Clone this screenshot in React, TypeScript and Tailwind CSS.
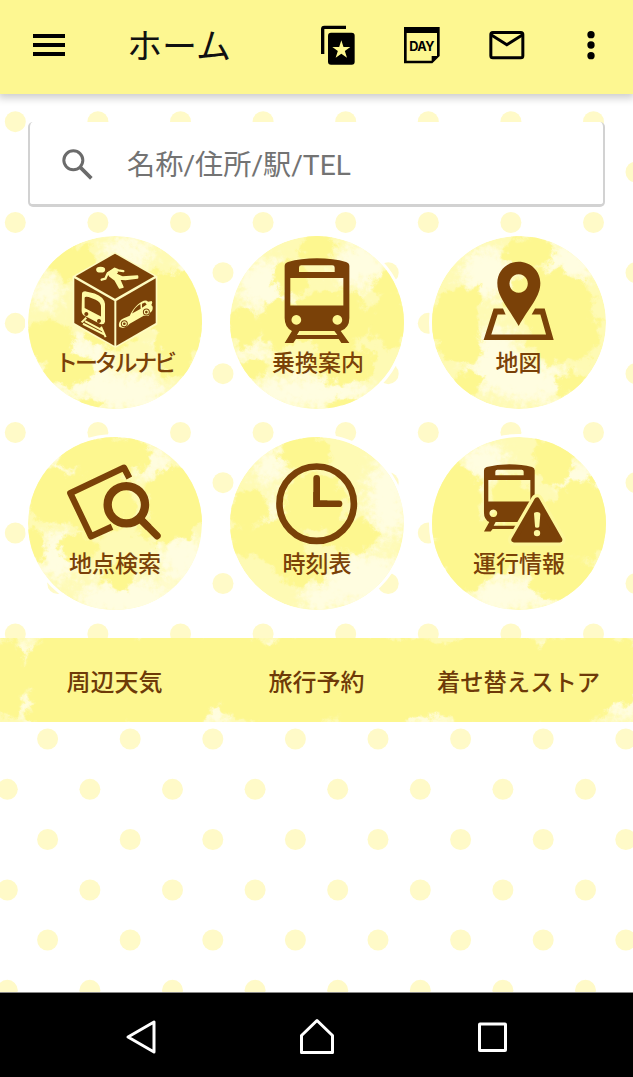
import React from 'react';

type Blob = [cx: number, cy: number, rx: number, ry: number];

interface Tile {
  label: string;
  labelClass: string;
  viewBox: string;
  deep: Blob[];
  pale: Blob[];
  icon: React.ReactNode;
}

const BROWN = '#7a4108';
const YELLOW = '#fdf78f';

// first dot x, row y
const dotRows: [number, number][] = [
  [15.3, 121.7], [-24.8, 172], [15.3, 222.5], [-24.8, 272.7], [15.3, 323.3], [-24.8, 373.7],
  [15.3, 432.5], [-24.8, 482.7], [15.3, 533], [-24.8, 583.5], [15.3, 634],
  [47.6, 739], [7.3, 789.3], [47.6, 839.5], [7.3, 890], [47.6, 940], [7.3, 990.3],
];

const DotBackground: React.FC = () => (
  <svg className="absolute inset-0 h-full w-full" viewBox="0 0 633 1077" fill="#fffac8">
    {dotRows.map(([x, y]) =>
      Array.from({ length: 9 }, (_, i) => <circle key={`${y}-${i}`} cx={x + i * 82.6} cy={y} r={10.5} />)
    )}
  </svg>
);

const Filters: React.FC = () => (
  <svg className="absolute h-0 w-0">
    <defs>
      <filter id="paint" x="-30%" y="-30%" width="160%" height="160%">
        <feGaussianBlur stdDeviation={4} result="b" />
        <feTurbulence type="fractalNoise" baseFrequency="0.03" numOctaves={5} seed={7} result="n" />
        <feDisplacementMap in="b" in2="n" scale={60} xChannelSelector="R" yChannelSelector="G" />
        <feGaussianBlur stdDeviation={2} />
      </filter>
      <filter id="mist" x="-40%" y="-40%" width="180%" height="180%">
        <feGaussianBlur stdDeviation={18} result="b" />
        <feTurbulence type="fractalNoise" baseFrequency="0.05" numOctaves={5} seed={3} result="n" />
        <feDisplacementMap in="b" in2="n" scale={80} xChannelSelector="G" yChannelSelector="R" />
      </filter>
    </defs>
  </svg>
);

const Wash: React.FC<{ deep: Blob[]; pale: Blob[] }> = ({ deep, pale }) => (
  <>
    <g fill="#fffde0" filter="url(#mist)">
      {pale.map(([cx, cy, rx, ry], i) => <ellipse key={i} cx={cx} cy={cy} rx={rx} ry={ry} />)}
    </g>
    <g fill={YELLOW} filter="url(#paint)">
      {deep.map(([cx, cy, rx, ry], i) => <ellipse key={i} cx={cx} cy={cy} rx={rx} ry={ry} />)}
    </g>
  </>
);

const CubeIcon = (
  <g>
    <path fill="#fefbc0" d="M299 80 426 153V297L300 368 172 297V153Z" />
    <g fill={BROWN}>
      <path d="M299 85 417 153 299 220 181 153Z" />
      <path d="M177 159 297 227V361L177 293Z" />
      <path d="M303 227 421 159V293L303 361Z" />
    </g>
    {/* walker */}
    <g fill="#fefba6" stroke="#fefba6" strokeLinecap="round" strokeLinejoin="round">
      <ellipse cx="256" cy="133" rx="13.500" ry="8.500" stroke="none" />
      <path fill="none" strokeWidth="7" d="M259 163 270 160 277 144 298 130 309 135 324 137" />
      <path strokeWidth="6" d="M278 143 299 132 305 140 300 146 322 156 366 153 366 157 330 162 311 160 322 185 313 187 300 164 284 152Z" />
    </g>
    {/* train */}
    <path
      fill="#fefba6"
      fillRule="evenodd"
      d="M200 206Q200 197 212 198L238 204Q266 214 269 235V289Q267 299 255 296L209 272Q199 267 199 256ZM208 217V248L257 273V241Q255 229 241 223L220 215Q209 212 208 217ZM213 260a6 6 0 1 0 .1 0ZM251 281a6 6 0 1 0 .1 0Z"
    />
    <path fill="none" stroke="#fefba6" strokeWidth="6" d="M213 277 199 291M257 304 271 335M209 287 261 315M203 295 266 327" />
    {/* car */}
    <path
      fill="#fefba6"
      d="M312 305C308 294 314 283 327 278L343 271C354 249 369 232 385 226Q394 223 398 229L409 227Q413 232 408 239L412 244Q413 257 404 262L400 271 385 271 343 295 334 304 323 308Z"
    />
    <path fill={BROWN} d="M350 264Q361 243 375 236L376 250ZM380 235 389 231 394 237 380 247Z" />
    <g fill="none" stroke={BROWN} strokeWidth="3">
      <circle cx="327" cy="295" r="9" />
      <circle cx="393" cy="260" r="9" />
    </g>
    <g fill={BROWN}>
      <circle cx="327" cy="295" r="4" />
      <circle cx="393" cy="260" r="4" />
    </g>
  </g>
);

const TrainIcon = (
  <path
    fill={BROWN}
    fillRule="evenodd"
    d="M202 122Q202 113 212 110Q250 99 299 99Q348 99 386 110Q396 113 396 122V278Q396 308 370 317L396 353H372L364 341H236L228 353H202L224 317Q202 306 202 278ZM252 120Q245 120 245 127V140H352V127Q352 120 345 120ZM219 158V240H378V158ZM237 269a14.500 14.500 0 1 0 .1 0ZM360 269a14.500 14.500 0 1 0 .1 0ZM246 317 239 329H360L351 317Z"
  />
);

const MapIcon = (
  <g fill={BROWN}>
    <path d="M220 247H248L256 265H232L213 325H377L360 265H334L344 247H373L400 342H190Z" />
    <path
      fillRule="evenodd"
      d="M295 107C259 107 231 135 231 171C231 212 262 242 295 300C328 242 360 212 360 171C360 135 331 107 295 107ZM295 145a27.500 27.500 0 1 1-.1 0Z"
    />
  </g>
);

const SpotSearchIcon = (
  <g fill="none" stroke={BROWN}>
    <path strokeWidth="19" strokeLinejoin="round" d="M342 158 326 127 165 203 227 333 290 304" />
    <circle cx="333" cy="238" r="56" strokeWidth="25" />
    <path strokeWidth="22" d="M370 276 400 306" />
    <path strokeWidth="22" strokeLinecap="round" d="M380 286 425 331" />
  </g>
);

const ClockIcon = (
  <g fill="none" stroke={BROWN}>
    <circle cx="298" cy="235" r="111.500" strokeWidth="20" />
    <path strokeWidth="20" strokeLinecap="round" d="M298 159V235H365" />
    <path strokeWidth="20" d="M298 200V235H330" />
  </g>
);

const TrainAlertIcon = (
  <g>
    <path
      fill={BROWN}
      fillRule="evenodd"
      d="M191 135Q191 127 199 125Q230 117 267 117Q305 117 335 125Q343 127 343 135V260L300 311H217L211 318H191L207 290Q191 282 191 262ZM231 133Q225 133 225 139V150H310V139Q310 133 304 133ZM204 164V228H330V164ZM219 252a11.500 11.500 0 1 0 .1 0ZM226 290 220 301H300V290Z"
    />
    <path
      d="M350 224 281 343H418Z"
      fill="#fdf79a"
      stroke="#fdf79a"
      strokeWidth="36"
      strokeLinejoin="round"
    />
    <path d="M350 224 281 343H418Z" fill={BROWN} stroke={BROWN} strokeWidth="16" strokeLinejoin="round" />
    <path fill="#fdf9a0" d="M341 265Q341 260 350 260T360 265L357 303Q356 307 350 307T344 303Z" />
    <circle cx="350" cy="323" r="9.500" fill="#fdf9a0" />
  </g>
);

const tiles: Tile[] = [
  {
    label: 'トータルナビ',
    labelClass: 'tracking-[-3.2px]',
    viewBox: '39 32 520 520',
    deep: [[175, 110, 75, 55], [450, 230, 140, 95], [100, 345, 75, 65], [490, 300, 80, 110], [290, 280, 90, 90], [490, 430, 50, 30], [225, 535, 40, 20], [160, 430, 80, 50]],
    pale: [[340, 80, 80, 45], [90, 200, 50, 50], [190, 420, 100, 90], [330, 500, 130, 60], [470, 350, 50, 35], [520, 150, 40, 40]],
    icon: CubeIcon,
  },
  {
    label: '乗換案内',
    labelClass: 'ml-[3px]',
    viewBox: '39 32 520 520',
    deep: [[305, 65, 55, 45], [80, 310, 50, 60], [185, 295, 60, 75], [340, 280, 120, 90], [515, 290, 60, 80], [380, 415, 100, 60], [510, 180, 45, 40], [380, 535, 45, 25], [220, 160, 55, 50], [100, 430, 55, 25]],
    pale: [[150, 180, 90, 80], [430, 120, 80, 70], [110, 380, 60, 30], [280, 500, 190, 50]],
    icon: TrainIcon,
  },
  {
    label: '地図',
    labelClass: '',
    viewBox: '36 30 520 520',
    deep: [[325, 80, 75, 50], [100, 290, 80, 100], [145, 225, 45, 45], [390, 220, 130, 90], [430, 320, 110, 90], [145, 475, 40, 40], [450, 475, 48, 35], [130, 375, 60, 45]],
    pale: [[200, 140, 80, 80], [450, 110, 90, 60], [220, 400, 80, 100], [330, 470, 120, 60]],
    icon: MapIcon,
  },
  {
    label: '地点検索',
    labelClass: 'ml-px',
    viewBox: '39 35 520 520',
    deep: [[270, 90, 140, 60], [110, 210, 80, 85], [490, 220, 100, 100], [250, 230, 110, 100], [310, 450, 50, 45], [60, 360, 35, 50], [450, 310, 90, 40], [190, 365, 60, 40]],
    pale: [[410, 110, 60, 50], [330, 520, 150, 65], [130, 390, 60, 80], [140, 120, 50, 30], [500, 400, 70, 80]],
    icon: SpotSearchIcon,
  },
  {
    label: '時刻表',
    labelClass: 'ml-px',
    viewBox: '39 35 520 520',
    deep: [[265, 80, 80, 55], [290, 230, 95, 90], [90, 250, 60, 55], [185, 350, 80, 75], [80, 345, 50, 45], [250, 430, 80, 50], [400, 330, 80, 50]],
    pale: [[160, 120, 50, 60], [510, 220, 60, 130], [440, 460, 120, 80], [160, 260, 25, 50], [310, 520, 60, 50]],
    icon: ClockIcon,
  },
  {
    label: '運行情報',
    labelClass: 'ml-px',
    viewBox: '36 35 520 520',
    deep: [[100, 240, 90, 130], [400, 110, 60, 70], [490, 280, 95, 120], [380, 320, 130, 90], [160, 370, 130, 90], [270, 220, 60, 70], [440, 460, 110, 65], [130, 460, 70, 40]],
    pale: [[190, 110, 70, 60], [470, 160, 70, 55], [240, 510, 90, 60], [350, 500, 60, 50], [110, 180, 50, 25]],
    icon: TrainAlertIcon,
  },
];

const Header: React.FC = () => (
  <header className="flex h-[94px] shrink-0 items-center bg-[#fdf791] pl-[33px] pr-[22px] shadow-[0_2px_8px_2px_rgba(0,0,0,0.2)]">
    <div className="mt-[-4px] flex w-8 flex-col gap-[5px]">
      <span className="h-1 bg-black"></span>
      <span className="h-1 bg-black"></span>
      <span className="h-1 bg-black"></span>
    </div>
    <h1 className="ml-[62px] flex-1 text-[35px] leading-none text-[#111]">ホーム</h1>
    <div className="mt-[-4px] flex gap-[44.3px]">
      <svg className="h-10 w-10" viewBox="54 75 120 120">
        <path d="M68 162V87Q68 82 73 82H138" fill="none" stroke="#000" strokeWidth="10" />
        <rect x="84" y="98" width="80" height="96" rx="9" />
        <path fill={YELLOW} d="M124 121 130.500 141H151L134.500 153 141 173 124 161 107 173 113.500 153 97 141H117.500Z" />
      </svg>
      <svg className="h-10 w-10" viewBox="307 75 120 120">
        <path fillRule="evenodd" d="M313 81H420V168L398 190H313ZM321 99V182H396V168H412V99Z" />
        <text x="366.500" y="153" textAnchor="middle" textLength="76" className="font-[Inter] text-[38px] font-bold">
          DAY
        </text>
      </svg>
      <svg className="h-10 w-10" viewBox="560 75 120 120" fill="none" stroke="#000" strokeWidth="9">
        <rect x="571.500" y="97.500" width="96" height="76" rx="6" />
        <path d="M572 104 619.500 134 667 104" />
      </svg>
      <svg className="h-10 w-10" viewBox="812 75 120 120">
        <circle cx="872" cy="104" r="11" />
        <circle cx="872" cy="135" r="11" />
        <circle cx="872" cy="167" r="11" />
      </svg>
    </div>
  </header>
);

const SearchBox: React.FC = () => (
  <div className="mx-[28px] mt-7 flex h-[85px] shrink-0 items-center rounded-[5px] border-x-2 border-b-[3px] border-[#d2d2d2] bg-white pl-[27px] pt-1">
    <svg className="h-10 w-10" viewBox="170 435 120 120" fill="none" stroke="#6b6b6b">
      <circle cx="219" cy="481" r="28.500" strokeWidth="9" />
      <path strokeWidth="11" d="M240 502 273 535" />
    </svg>
    <span className="ml-[30px] mt-[3px] text-[28.200px] leading-none text-[#737373]">名称/住所/駅/TEL</span>
  </div>
);

const MenuTile: React.FC<{ tile: Tile }> = ({ tile }) => (
  <button className="relative flex h-[173.5px] flex-col items-center overflow-hidden rounded-full bg-[#fefab4] pt-[116px] outline-3 outline-white">
    <svg className="absolute inset-0 h-full w-full" viewBox={tile.viewBox}>
      <Wash deep={tile.deep} pale={tile.pale} />
      {tile.icon}
    </svg>
    <span className={`relative whitespace-nowrap text-[23px] font-medium leading-6 text-[#7a4108] ${tile.labelClass}`}>
      {tile.label}
    </span>
  </button>
);

const LinkBar: React.FC = () => (
  <nav className="relative mt-7 flex h-[84px] shrink-0 items-center overflow-hidden bg-[#fefab4]">
    <svg className="absolute inset-0 h-full w-full" viewBox="0 0 1899 252">
      <Wash
        deep={[[20, 120, 60, 120], [270, 110, 200, 160], [520, 120, 150, 160], [250, 230, 170, 60], [480, 230, 140, 50], [860, 140, 230, 130], [1010, 60, 240, 80], [1230, 120, 200, 120], [1480, 130, 210, 150], [1760, 100, 180, 120], [690, 30, 110, 50], [1130, 220, 120, 60], [1700, 210, 110, 70]]}
        pale={[[80, 130, 35, 130], [640, 220, 50, 45], [780, 50, 90, 25], [1260, 235, 120, 25], [1630, 60, 30, 40], [1860, 200, 60, 40]]}
      />
    </svg>
    <div className="relative grid w-full grid-cols-[174px_174px_174px] justify-center gap-x-7 pt-1.5 text-center text-[24px] font-medium leading-8 text-[#6e3a08]">
      <a>周辺天気</a>
      <a>旅行予約</a>
      <a className="whitespace-nowrap text-[23.300px]">着せ替えストア</a>
    </div>
  </nav>
);

const SystemNav: React.FC = () => (
  <footer className="mt-auto flex h-[85px] shrink-0 items-center justify-between border-t border-[#888] bg-black px-[121px] pt-[4px]">
    <svg className="h-10 w-10" viewBox="0 0 40 40" fill="none" stroke="#fff" strokeWidth="3">
      <path strokeLinejoin="round" d="M33 5V35L7 20Z" />
    </svg>
    <svg className="h-10 w-10" viewBox="0 0 40 40" fill="none" stroke="#fff" strokeWidth="3">
      <path strokeLinejoin="round" d="M20 3.500 35.500 18.500V35.500H4.500V18.500Z" />
    </svg>
    <svg className="h-10 w-10" viewBox="0 0 40 40" fill="none" stroke="#fff" strokeWidth="3">
      <rect x="7.500" y="7" width="26" height="26.500" rx="0.500" />
    </svg>
  </footer>
);

const App: React.FC = () => {
  return (
    <div className="relative h-[1077px] w-[633px] overflow-hidden bg-white font-[Roboto,'Noto_Sans_CJK_JP',sans-serif]">
      <Filters />
      <DotBackground />
      <div className="relative flex h-full flex-col">
        <Header />
        <SearchBox />
        <main className="mt-[28.500px] grid grid-cols-[174px_174px_174px] justify-center gap-x-7 gap-y-[27.500px]">
          {tiles.map((tile) => (
            <MenuTile key={tile.label} tile={tile} />
          ))}
        </main>
        <LinkBar />
        <SystemNav />
      </div>
    </div>
  );
};

export default App;
